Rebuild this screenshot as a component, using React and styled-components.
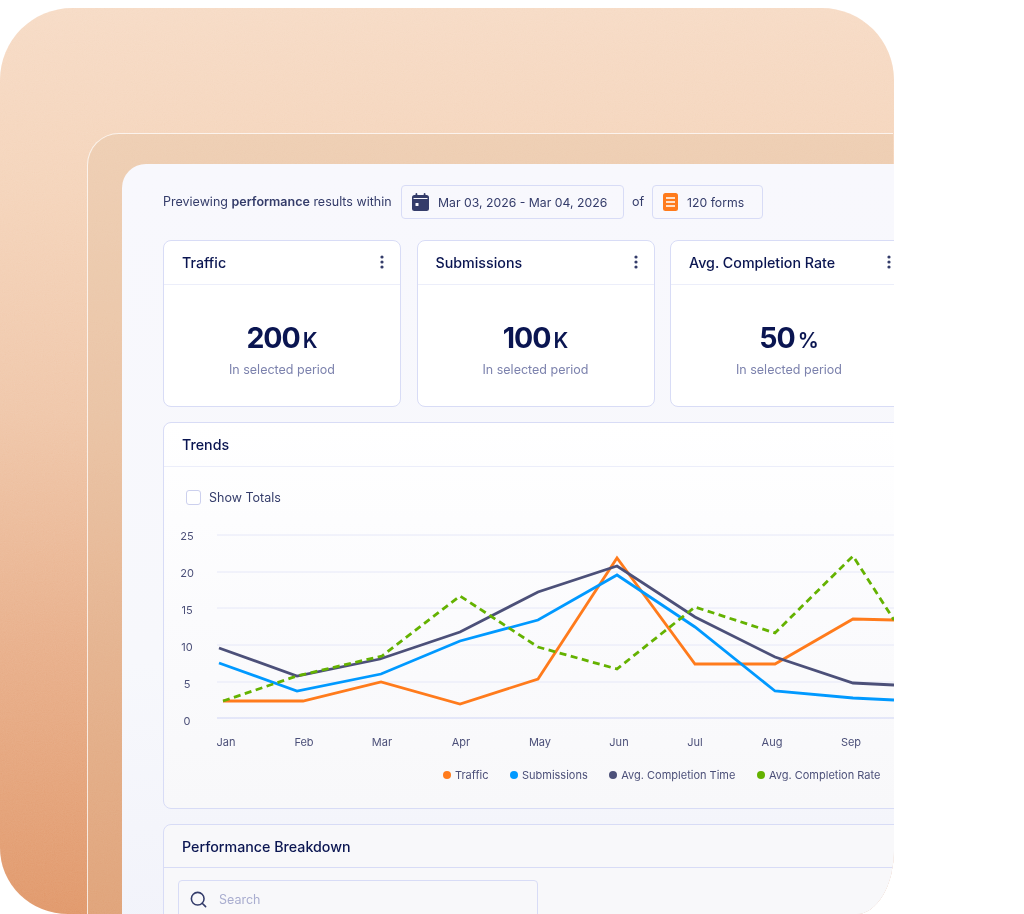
import React from "react";
import styled, { createGlobalStyle } from "styled-components";
import { Search } from "lucide-react";

const COLORS = {
  navy: "#0a1551",
  ink: "#343c6a",
  muted: "#7c82ad",
  line: "#d8dcf6",
  lineSoft: "#eceefa",
  orange: "#ff7b1c",
  blue: "#0099ff",
  slate: "#4c5079",
  green: "#64b200",
};

const X_LABELS = [
  ["Jan", 226],
  ["Feb", 304],
  ["Mar", 382],
  ["Apr", 461],
  ["May", 540],
  ["Jun", 619],
  ["Jul", 695],
  ["Aug", 772],
  ["Sep", 851],
];

// grid line y, axis label baseline
const Y_TICKS = [
  [25, 535, 540],
  [20, 572, 577],
  [15, 608, 614],
  [10, 645, 651],
  [5, 682, 688],
  [0, 718, 725],
];

const SERIES = [
  {
    color: COLORS.orange,
    points: "223,701 303,701 381,682 460,704 538,679 617,558 695,664 775,664 853,619 894,620",
  },
  {
    color: COLORS.slate,
    points: "219,648 297,676 380,659 460,632 538,592 617,566 695,617 775,657 853,683 894,685",
  },
  {
    color: COLORS.blue,
    points: "219,663 297,691 381,674 460,641 538,620 617,575 695,627 775,691 853,698 894,700",
  },
  {
    color: COLORS.green,
    dashed: true,
    points: "223,701 297,676 382,656 460,596 538,647 617,669 695,607 775,633 853,556 894,620",
  },
];

const LEGEND = [
  ["Traffic", COLORS.orange],
  ["Submissions", COLORS.blue],
  ["Avg. Completion Time", COLORS.slate],
  ["Avg. Completion Rate", COLORS.green],
];

const STATS = [
  { title: "Traffic", value: "200", unit: "K" },
  { title: "Submissions", value: "100", unit: "K" },
  { title: "Avg. Completion Rate", value: "50", unit: "%" },
];

const GlobalStyle = createGlobalStyle`
  html, body {
    margin: 0;
    background: #fff;
  }
  body {
    font-family: Inter, "Liberation Sans", sans-serif;
    overflow: hidden;
  }
  * {
    box-sizing: border-box;
  }
`;

const Page = styled.div`
  width: 1024px;
  height: 914px;
  padding-top: 8px;
  overflow: hidden;
`;

const Panel = styled.div`
  position: relative;
  width: 894px;
  height: 906px;
  padding: 125px 1px 0 87px;
  overflow: hidden;
  border-radius: 72px 72px 38px 68px / 72px 72px 64px 66px;
  background: linear-gradient(180deg, #f6dac4 0%, #f4d3b9 20%, #efc5a7 45%, #e8ae89 70%, #e09668 100%);
`;

const Grain = styled.svg`
  position: absolute;
  inset: 0;
  width: 100%;
  height: 100%;
  opacity: 0.3;
  mix-blend-mode: soft-light;
  pointer-events: none;
`;

const Frame = styled.div`
  position: relative;
  height: 860px;
  padding: 30px 0 0 34px;
  border: 1px solid rgba(255, 255, 255, 0.75);
  border-width: 1px 0 0 1px;
  border-top-left-radius: 32px;
  background: rgba(222, 190, 155, 0.3);
`;

const Screen = styled.div`
  height: 830px;
  margin-right: -1px;
  padding: 21px 0 0 41px;
  overflow: hidden;
  border-top-left-radius: 24px;
  background: linear-gradient(180deg, #f8f8fd 0%, #f7f8fc 60%, #f1f2fa 100%);
`;

const FilterBar = styled.div`
  display: flex;
  align-items: center;
  height: 34px;
  font-size: 12.5px;
  color: ${COLORS.ink};
`;

const FilterText = styled.span`
  width: 238px;
  padding-bottom: 2px;
  white-space: nowrap;

  strong {
    font-weight: 600;
  }
`;

const Of = styled.span`
  width: 28px;
  padding-bottom: 2px;
  text-align: center;
`;

const Chip = styled.div`
  display: flex;
  align-items: center;
  gap: 9px;
  width: ${(p) => p.$width}px;
  height: 34px;
  padding-left: 10px;
  border: 1px solid ${COLORS.line};
  border-radius: 4px;
  font-size: 12.25px;
  white-space: nowrap;
`;

const StatRow = styled.div`
  display: flex;
  gap: 15.5px;
  width: 800px;
  margin-top: 21px;
`;

const StatCard = styled.div`
  flex: 0 0 238px;
  height: 167px;
  border: 1px solid ${COLORS.line};
  border-radius: 8px;
  background: #fff;
`;

const CardHeader = styled.div`
  display: flex;
  align-items: center;
  justify-content: space-between;
  height: 44px;
  padding: 0 16px 1px 18px;
  border-bottom: 1px solid ${COLORS.lineSoft};
  font-size: 14.25px;
  font-weight: 500;
  color: ${COLORS.navy};
  white-space: nowrap;
`;

const StatBody = styled.div`
  display: flex;
  flex-direction: column;
  align-items: center;
  padding-top: 35px;
`;

const StatValue = styled.div`
  display: flex;
  align-items: baseline;
  gap: 3px;
  height: 36px;
  font-size: 28.5px;
  line-height: 36px;
  font-weight: 700;
  letter-spacing: -1px;
  color: ${COLORS.navy};

  small {
    font-size: 21px;
    font-weight: 600;
    letter-spacing: 0;
  }
`;

const StatCaption = styled.div`
  margin-top: 6px;
  font-size: 12.5px;
  color: ${COLORS.muted};
`;

const WideCard = styled.div`
  width: 800px;
  margin-top: ${(p) => p.$top}px;
  border: 1px solid ${COLORS.line};
  border-radius: 8px;
  background: linear-gradient(180deg, #fff 0%, #fbfbfd 50%, #f8f8fa 100%);
`;

const TrendsCard = styled(WideCard)`
  height: 387px;
`;

const BreakdownCard = styled(WideCard)`
  height: 200px;
  background: #f8f8fa;
`;

const Totals = styled.label`
  display: flex;
  align-items: center;
  gap: 8px;
  margin: 23px 0 0 22px;
  font-size: 12.5px;
  color: ${COLORS.ink};
`;

const Checkbox = styled.span`
  width: 15px;
  height: 15px;
  border: 1px solid #ccd0ee;
  border-radius: 3px;
  background: #fff;
`;

const Chart = styled.svg`
  display: block;
  margin-top: 20px;
  overflow: visible;
`;

const AxisText = styled.text`
  font-size: 11px;
  fill: ${COLORS.slate};
`;

const Legend = styled.div`
  display: flex;
  gap: 21.5px;
  margin: 11px 0 0 279px;
  font-size: 11px;
  color: ${COLORS.slate};
  white-space: nowrap;
`;

const LegendItem = styled.div`
  display: flex;
  align-items: center;
  gap: 4px;
`;

const Dot = styled.span`
  width: 8px;
  height: 8px;
  border-radius: 50%;
  background: ${(p) => p.$color};
`;

const BreakdownHeader = styled(CardHeader)`
  height: 43px;
  padding-bottom: 0;
  border-bottom-color: ${COLORS.line};
  background: transparent;
`;

const SearchBox = styled.div`
  display: flex;
  align-items: center;
  gap: 11px;
  width: 360px;
  height: 40px;
  margin: 12px 0 0 14px;
  padding: 0 0 2px 10px;
  border: 1px solid ${COLORS.line};
  border-radius: 4px;
  font-size: 12.5px;
  color: #a9adcf;

  svg {
    color: ${COLORS.ink};
  }
`;

const Kebab = () => (
  <svg width="4" height="14" viewBox="0 0 4 14">
    <circle cx="2" cy="2" r="1.6" fill={COLORS.ink} />
    <circle cx="2" cy="7" r="1.6" fill={COLORS.ink} />
    <circle cx="2" cy="12" r="1.6" fill={COLORS.ink} />
  </svg>
);

const CalendarIcon = () => (
  <svg width="17" height="18" viewBox="0 0 17 18">
    <path
      d="M2.5 2h12A2.5 2.5 0 0 1 17 4.5v11a2.5 2.5 0 0 1-2.5 2.5h-12A2.5 2.5 0 0 1 0 15.500v-11A2.500 2.500 0 0 1 2.500 2z"
      fill={COLORS.ink}
    />
    <rect x="3.500" y="0" width="1.800" height="4" rx="0.900" fill={COLORS.ink} />
    <rect x="11.700" y="0" width="1.800" height="4" rx="0.900" fill={COLORS.ink} />
    <rect x="1.500" y="5" width="14" height="1" fill="#f8f8fd" />
    <rect x="3.500" y="10" width="3" height="3" rx="0.500" fill="#f8f8fd" />
  </svg>
);

const FormsIcon = () => (
  <svg width="15" height="18" viewBox="0 0 15 18">
    <rect width="15" height="18" rx="2.500" fill={COLORS.orange} />
    <rect x="3" y="4" width="9" height="2" fill="#ffe1c9" />
    <rect x="3" y="8" width="9" height="2" fill="#ffe1c9" />
    <rect x="3" y="12" width="9" height="2" fill="#ffe1c9" />
  </svg>
);

const TrendChart = () => (
  <Chart width="730" height="232" viewBox="164 525 730 232">
    {Y_TICKS.map(([tick, y, labelY]) => (
      <g key={tick}>
        <line x1="217" x2="894" y1={y} y2={y} stroke={tick === 0 ? "#cfd4f5" : "#e6e8f8"} strokeWidth="1" />
        <AxisText x="187" y={labelY} textAnchor="middle">
          {tick}
        </AxisText>
      </g>
    ))}
    {X_LABELS.map(([label, x]) => (
      <AxisText key={label} x={x} y="746" textAnchor="middle">
        {label}
      </AxisText>
    ))}
    {SERIES.map((s) => (
      <polyline
        key={s.color}
        points={s.points}
        fill="none"
        stroke={s.color}
        strokeWidth="2.8"
        strokeLinejoin="miter"
        strokeDasharray={s.dashed ? "7 4.500" : undefined}
      />
    ))}
  </Chart>
);

const App = () => (
  <Page>
    <GlobalStyle />
    <Panel>
      <Grain aria-hidden="true">
        <filter id="grain">
          <feTurbulence type="fractalNoise" baseFrequency="0.9" numOctaves="2" />
          <feColorMatrix values="0.33 0.33 0.33 0 -0.04 0.33 0.33 0.33 0 -0.04 0.33 0.33 0.33 0 -0.04 0 0 0 0 1" />
        </filter>
        <rect width="100%" height="100%" filter="url(#grain)" />
      </Grain>
      <Frame>
        <Screen>
          <FilterBar>
            <FilterText>
              Previewing <strong>performance</strong> results within
            </FilterText>
            <Chip $width={223}>
              <CalendarIcon />
              Mar 03, 2026 - Mar 04, 2026
            </Chip>
            <Of>of</Of>
            <Chip $width={111}>
              <FormsIcon />
              120 forms
            </Chip>
          </FilterBar>

          <StatRow>
            {STATS.map((stat) => (
              <StatCard key={stat.title}>
                <CardHeader>
                  {stat.title}
                  <Kebab />
                </CardHeader>
                <StatBody>
                  <StatValue>
                    {stat.value}
                    <small>{stat.unit}</small>
                  </StatValue>
                  <StatCaption>In selected period</StatCaption>
                </StatBody>
              </StatCard>
            ))}
          </StatRow>

          <TrendsCard $top={15}>
            <CardHeader>Trends</CardHeader>
            <Totals>
              <Checkbox />
              Show Totals
            </Totals>
            <TrendChart />
            <Legend>
              {LEGEND.map(([label, color]) => (
                <LegendItem key={label}>
                  <Dot $color={color} />
                  {label}
                </LegendItem>
              ))}
            </Legend>
          </TrendsCard>

          <BreakdownCard $top={15}>
            <BreakdownHeader>Performance Breakdown</BreakdownHeader>
            <SearchBox>
              <Search size={19} strokeWidth={2} />
              Search
            </SearchBox>
          </BreakdownCard>
        </Screen>
      </Frame>
    </Panel>
  </Page>
);

export default App;
